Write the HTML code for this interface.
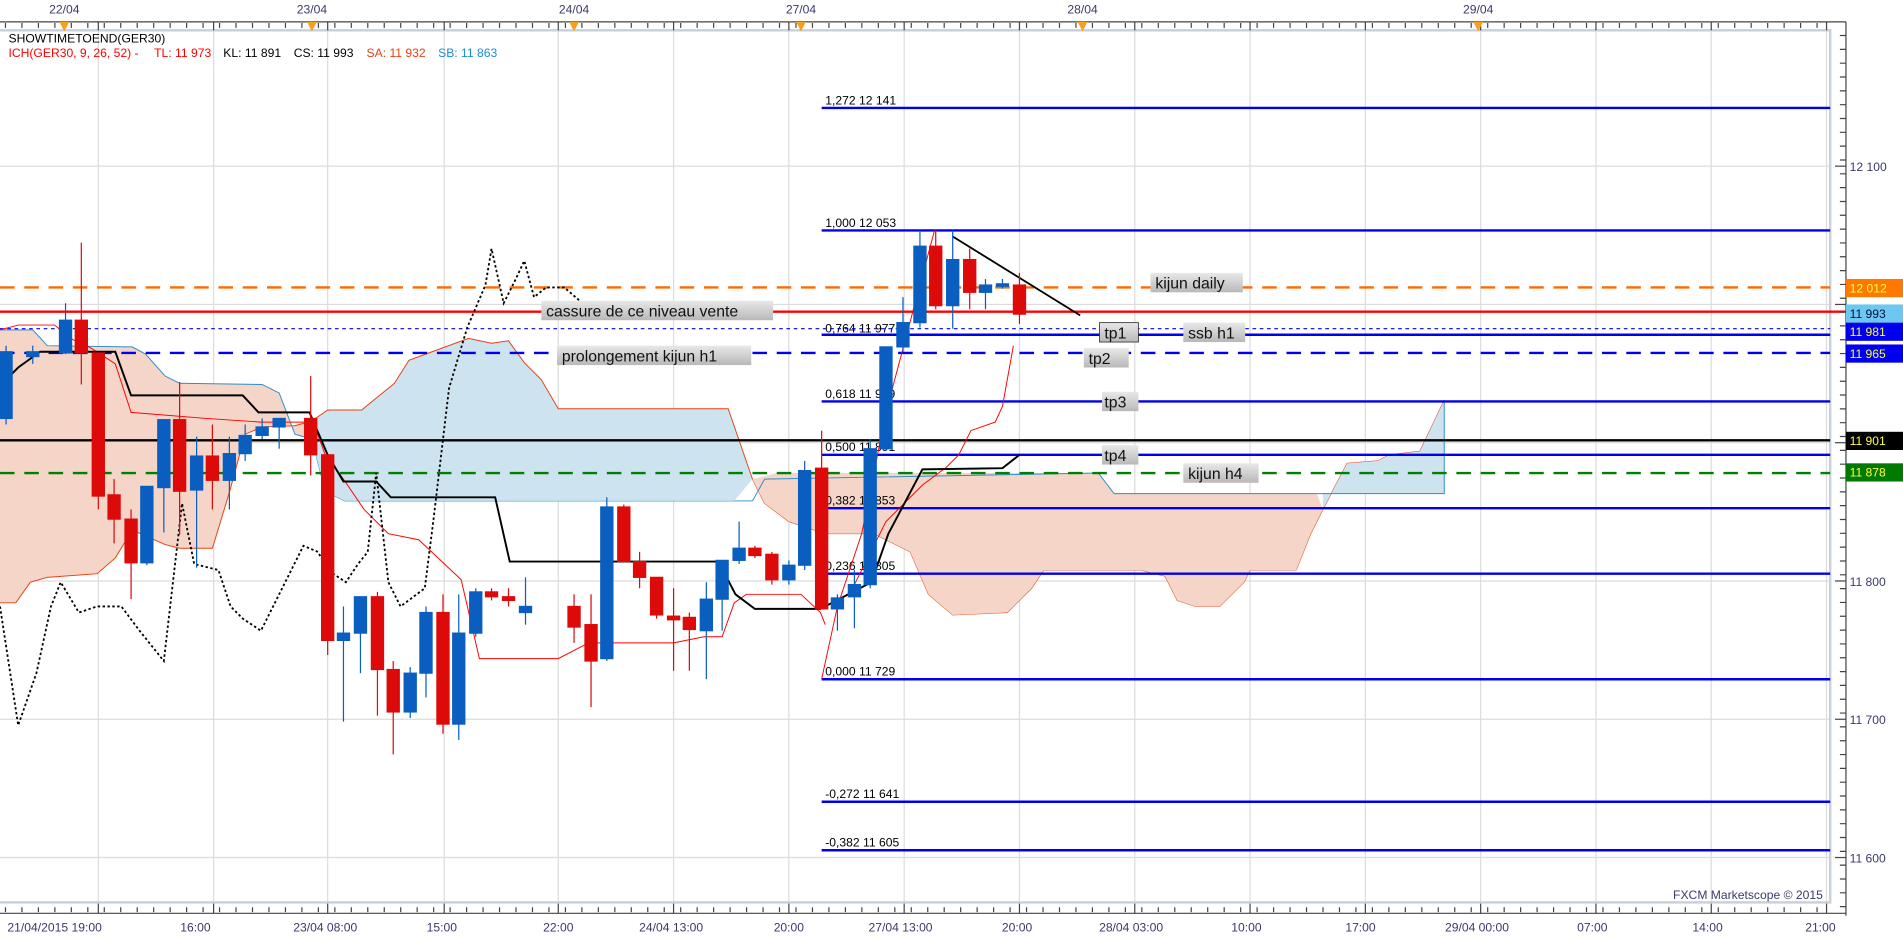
<!DOCTYPE html>
<html><head><meta charset="utf-8"><style>
html,body{margin:0;padding:0;background:#fff;overflow:hidden}
svg{display:block}
text{font-family:"Liberation Sans","DejaVu Sans",sans-serif}
</style></head><body>
<svg width="1903" height="940" viewBox="0 0 1568 775" preserveAspectRatio="none" xmlns="http://www.w3.org/2000/svg">
<rect width="1568" height="775" fill="#fff"/>
<!-- grid -->
<g stroke="#dcdcdc" stroke-width="1">
<line x1="81" y1="25" x2="81" y2="745"/><line x1="176" y1="25" x2="176" y2="745"/><line x1="270" y1="25" x2="270" y2="745"/><line x1="366" y1="25" x2="366" y2="745"/><line x1="460" y1="25" x2="460" y2="745"/><line x1="555" y1="25" x2="555" y2="745"/><line x1="650" y1="25" x2="650" y2="745"/><line x1="745" y1="25" x2="745" y2="745"/><line x1="840" y1="25" x2="840" y2="745"/><line x1="935" y1="25" x2="935" y2="745"/><line x1="1030" y1="25" x2="1030" y2="745"/><line x1="1125" y1="25" x2="1125" y2="745"/><line x1="1220" y1="25" x2="1220" y2="745"/><line x1="1315" y1="25" x2="1315" y2="745"/><line x1="1410" y1="25" x2="1410" y2="745"/><line x1="1505" y1="25" x2="1505" y2="745"/>
<line x1="0" y1="137" x2="1508" y2="137"/><line x1="0" y1="251" x2="1508" y2="251"/><line x1="0" y1="365" x2="1508" y2="365"/><line x1="0" y1="479" x2="1508" y2="479"/><line x1="0" y1="593" x2="1508" y2="593"/><line x1="0" y1="707" x2="1508" y2="707"/>
</g>
<rect x="-2" y="25" width="1510" height="719" fill="none" stroke="#c8d0dc" stroke-width="2"/>
<!-- clouds -->
<polygon fill="#f5d5c8" points="0,272 27,272 39,285 109,286 120,292 136,310 148,316 216,317 230,324 243,358 257,362 257,347 243,351 216,352 202,358 189,406 175,452 148,452 136,449 109,437 95,460 80,473 39,476 25,480 13,497 0,497"/>
<polyline fill="none" stroke="#2a8fc8" stroke-width="0.8" points="0,272 27,272 39,285 109,286 120,292 136,310 148,316 216,317 230,324 243,358 257,362 268,405 284,413 620,413"/>
<polygon fill="#cde3f0" points="257,347 270,338 298,338 325,316 337,297 356,290 386,279 405,283 419,281 432,299 446,313 460,337 600,337 620,395 605,413 284,413 268,405 257,362"/>
<polyline fill="none" stroke="#e84010" stroke-width="0.8" points="0,497 13,497 25,480 39,476 80,473 95,460 109,437 136,449 148,452 175,452 189,406 202,358 216,352 243,351 257,347 270,338 298,338 325,316 337,297 356,290 386,279 405,283 419,281 432,299 446,313 460,337 600,337 620,395 630,415 650,430 680,440 720,440 750,455 765,490 785,507 830,505 850,485 860,470 940,470 960,475 970,495 985,500 1005,500 1025,480 1030,470 1068,470 1080,440 1090,420 1110,382 1135,380 1145,375 1170,372 1190,330"/>
<polygon fill="#f5d5c8" points="620,395 640,390 905,390 918,407 1085,407 1090,420 1080,440 1068,470 1030,470 1025,480 1005,500 985,500 970,495 960,475 940,470 860,470 850,485 830,505 785,507 765,490 750,455 720,440 680,440 650,430 630,415"/>
<polygon fill="#cde3f0" points="1090,407 1190,407 1190,330 1170,372 1145,375 1135,380 1110,382 1090,420"/>
<polyline fill="none" stroke="#2a8fc8" stroke-width="0.8" points="620,413 630,395 905,390 918,407 1190,407 1190,330"/>
<!-- horizontal levels -->
<g stroke-width="2">
<line x1="677" y1="89" x2="1508" y2="89" stroke="#0000ee"/>
<line x1="677" y1="190" x2="1508" y2="190" stroke="#0000ee"/>
<line x1="0" y1="237" x2="1508" y2="237" stroke="#ff6a00" stroke-dasharray="12,8"/>
<line x1="0" y1="257" x2="1521" y2="257" stroke="#ff0000"/>
<line x1="0" y1="271" x2="1508" y2="271" stroke="#0000ee" stroke-width="1" stroke-dasharray="3,3"/>
<line x1="677" y1="276" x2="1508" y2="276" stroke="#0000ee"/>
<line x1="0" y1="291" x2="1508" y2="291" stroke="#0000ee" stroke-dasharray="12,8"/>
<line x1="677" y1="331" x2="1508" y2="331" stroke="#0000ee"/>
<line x1="0" y1="363" x2="1508" y2="363" stroke="#000"/>
<line x1="677" y1="375" x2="1508" y2="375" stroke="#0000ee"/>
<line x1="0" y1="390" x2="1508" y2="390" stroke="#008000" stroke-dasharray="12,8"/>
<line x1="677" y1="419" x2="1508" y2="419" stroke="#0000ee"/>
<line x1="677" y1="473" x2="1508" y2="473" stroke="#0000ee"/>
<line x1="677" y1="560" x2="1508" y2="560" stroke="#0000ee"/>
<line x1="677" y1="661" x2="1508" y2="661" stroke="#0000ee"/>
<line x1="677" y1="701" x2="1508" y2="701" stroke="#0000ee"/>
</g>
<g font-size="10" fill="#000">
<text x="680" y="86">1,272 12 141</text><text x="680" y="187">1,000 12 053</text><text x="680" y="274">0,764 11 977</text><text x="680" y="328">0,618 11 929</text><text x="680" y="372">0,500 11 891</text><text x="680" y="416">0,382 11 853</text><text x="680" y="470">0,236 11 805</text><text x="680" y="557">0,000 11 729</text><text x="680" y="658">-0,272 11 641</text><text x="680" y="698">-0,382 11 605</text>
</g>
<!-- tenkan -->
<polyline fill="none" stroke="#ff0000" stroke-width="0.8" points="0,272 15,268 45,268 60,280 75,287 95,300 108,340 170,345 215,348 258,348 268,375 283,395 300,420 320,440 345,445 380,478 395,543 460,543 485,530 555,530 580,525 595,525 605,497 615,490 660,490 676,505 680,515"/>
<polyline fill="none" stroke="#ff0000" stroke-width="0.8" points="677,560 690,500 710,440 730,340 750,265 770,190"/>
<polyline fill="none" stroke="#ff0000" stroke-width="0.8" points="700,490 715,460 730,430 760,400 780,385 790,375 800,355 820,348 826,335 835,285"/>
<!-- kijun -->
<polyline fill="none" stroke="#000" stroke-width="1.6" points="0,318 15,303 33,290 95,290 108,326 200,326 213,340 255,340 270,375 283,397 310,397 322,410 408,410 420,463 592,463 606,490 622,502 660,502 676,502 718,480 732,440 760,387 826,386 840,375"/>
<line x1="785" y1="195" x2="890" y2="260" stroke="#000" stroke-width="1.5"/>
<!-- chikou -->
<polyline fill="none" stroke="#000" stroke-width="1.5" stroke-dasharray="2,2" points="0,500 15,598 30,555 42,500 50,480 65,505 80,500 100,500 115,520 135,545 150,415 160,465 180,470 190,500 200,510 215,520 230,490 250,450 262,455 270,470 285,480 295,465 303,455 310,390 320,480 330,500 350,485 357,430 370,320 385,270 400,235 405,205 415,250 425,230 432,215 440,245 450,237 465,237 480,250"/>
<!-- candles -->
<g stroke-width="1">
<g fill="#0a5ec0" stroke="#0a5ec0">
<line x1="5" y1="285" x2="5" y2="350"/><rect x="0" y="290" width="10" height="55"/>
<line x1="27" y1="285" x2="27" y2="300"/><rect x="22" y="290" width="10" height="4"/>
<line x1="54" y1="250" x2="54" y2="292"/><rect x="49" y="264" width="10" height="27"/>
<line x1="121" y1="401" x2="121" y2="466"/><rect x="116" y="401" width="10" height="63"/>
<line x1="135" y1="346" x2="135" y2="439"/><rect x="130" y="346" width="10" height="56"/>
<line x1="162" y1="360" x2="162" y2="468"/><rect x="157" y="376" width="10" height="28"/>
<line x1="189" y1="360" x2="189" y2="420"/><rect x="184" y="374" width="10" height="22"/>
<line x1="202" y1="350" x2="202" y2="380"/><rect x="197" y="359" width="10" height="15"/>
<line x1="216" y1="345" x2="216" y2="362"/><rect x="211" y="352" width="10" height="7"/>
<line x1="230" y1="345" x2="230" y2="370"/><rect x="225" y="345" width="10" height="7"/>
<line x1="283" y1="500" x2="283" y2="595"/><rect x="278" y="522" width="10" height="6"/>
<line x1="297" y1="492" x2="297" y2="555"/><rect x="292" y="492" width="10" height="30"/>
<line x1="338" y1="550" x2="338" y2="592"/><rect x="333" y="555" width="10" height="32"/>
<line x1="351" y1="500" x2="351" y2="575"/><rect x="346" y="505" width="10" height="50"/>
<line x1="378" y1="490" x2="378" y2="610"/><rect x="373" y="522" width="10" height="75"/>
<line x1="392" y1="485" x2="392" y2="525"/><rect x="387" y="488" width="10" height="34"/>
<line x1="433" y1="476" x2="433" y2="515"/><rect x="428" y="500" width="10" height="5"/>
<line x1="500" y1="410" x2="500" y2="545"/><rect x="495" y="418" width="10" height="125"/>
<line x1="582" y1="480" x2="582" y2="560"/><rect x="577" y="494" width="10" height="26"/>
<line x1="595" y1="462" x2="595" y2="520"/><rect x="590" y="462" width="10" height="32"/>
<line x1="609" y1="430" x2="609" y2="465"/><rect x="604" y="452" width="10" height="10"/>
<line x1="650" y1="462" x2="650" y2="482"/><rect x="645" y="466" width="10" height="12"/>
<line x1="663" y1="380" x2="663" y2="470"/><rect x="658" y="388" width="10" height="78"/>
<line x1="690" y1="490" x2="690" y2="520"/><rect x="685" y="493" width="10" height="9"/>
<line x1="704" y1="470" x2="704" y2="518"/><rect x="699" y="482" width="10" height="10"/>
<line x1="717" y1="362" x2="717" y2="485"/><rect x="712" y="370" width="10" height="112"/>
<line x1="730" y1="286" x2="730" y2="372"/><rect x="725" y="286" width="10" height="84"/>
<line x1="744" y1="245" x2="744" y2="290"/><rect x="739" y="266" width="10" height="20"/>
<line x1="758" y1="190" x2="758" y2="270"/><rect x="753" y="203" width="10" height="63"/>
<line x1="785" y1="190" x2="785" y2="271"/><rect x="780" y="214" width="10" height="38"/>
<line x1="812" y1="230" x2="812" y2="255"/><rect x="807" y="235" width="10" height="6"/>
<line x1="826" y1="230" x2="826" y2="238"/><rect x="821" y="234" width="10" height="2"/>
</g>
<g fill="#dd0a0a" stroke="#dd0a0a">
<line x1="67" y1="200" x2="67" y2="317"/><rect x="62" y="264" width="10" height="27"/>
<line x1="81" y1="291" x2="81" y2="420"/><rect x="76" y="291" width="10" height="118"/>
<line x1="94" y1="395" x2="94" y2="448"/><rect x="89" y="408" width="10" height="20"/>
<line x1="108" y1="420" x2="108" y2="494"/><rect x="103" y="428" width="10" height="36"/>
<line x1="148" y1="315" x2="148" y2="441"/><rect x="143" y="346" width="10" height="59"/>
<line x1="175" y1="350" x2="175" y2="420"/><rect x="170" y="376" width="10" height="20"/>
<line x1="256" y1="310" x2="256" y2="392"/><rect x="251" y="345" width="10" height="30"/>
<line x1="270" y1="375" x2="270" y2="540"/><rect x="265" y="375" width="10" height="153"/>
<line x1="311" y1="488" x2="311" y2="590"/><rect x="306" y="492" width="10" height="60"/>
<line x1="324" y1="545" x2="324" y2="622"/><rect x="319" y="552" width="10" height="35"/>
<line x1="365" y1="490" x2="365" y2="605"/><rect x="360" y="505" width="10" height="92"/>
<line x1="405" y1="485" x2="405" y2="495"/><rect x="400" y="488" width="10" height="4"/>
<line x1="419" y1="485" x2="419" y2="500"/><rect x="414" y="492" width="10" height="3"/>
<line x1="473" y1="490" x2="473" y2="530"/><rect x="468" y="500" width="10" height="17"/>
<line x1="487" y1="490" x2="487" y2="583"/><rect x="482" y="515" width="10" height="30"/>
<line x1="514" y1="416" x2="514" y2="463"/><rect x="509" y="418" width="10" height="45"/>
<line x1="527" y1="455" x2="527" y2="485"/><rect x="522" y="463" width="10" height="13"/>
<line x1="541" y1="476" x2="541" y2="510"/><rect x="536" y="476" width="10" height="31"/>
<line x1="555" y1="485" x2="555" y2="553"/><rect x="550" y="508" width="10" height="3"/>
<line x1="568" y1="505" x2="568" y2="553"/><rect x="563" y="509" width="10" height="10"/>
<line x1="622" y1="450" x2="622" y2="460"/><rect x="617" y="452" width="10" height="6"/>
<line x1="636" y1="455" x2="636" y2="482"/><rect x="631" y="457" width="10" height="21"/>
<line x1="677" y1="355" x2="677" y2="502"/><rect x="672" y="386" width="10" height="116"/>
<line x1="771" y1="190" x2="771" y2="255"/><rect x="766" y="203" width="10" height="49"/>
<line x1="799" y1="205" x2="799" y2="255"/><rect x="794" y="214" width="10" height="27"/>
<line x1="840" y1="225" x2="840" y2="267"/><rect x="835" y="235" width="10" height="24"/>
</g>
</g>
<!-- annotation boxes -->
<defs><linearGradient id="g" x1="0" y1="0" x2="0" y2="1"><stop offset="0" stop-color="#e8e8e8"/><stop offset="1" stop-color="#b8b8b8"/></linearGradient></defs>
<g font-size="13" fill="#111">
<rect x="446" y="248" width="191" height="16" fill="url(#g)"/><text x="450" y="261">cassure de ce niveau vente</text>
<rect x="459" y="285" width="160" height="16" fill="url(#g)"/><text x="463" y="298">prolongement kijun h1</text>
<rect x="948" y="225" width="76" height="16" fill="url(#g)"/><text x="952" y="238">kijun daily</text>
<rect x="906" y="266" width="32" height="16" fill="url(#g)" stroke="#333" stroke-width="0.7"/><text x="910" y="279">tp1</text>
<rect x="975" y="266" width="51" height="16" fill="url(#g)"/><text x="979" y="279">ssb h1</text>
<rect x="893" y="287" width="37" height="16" fill="url(#g)"/><text x="897" y="300">tp2</text>
<rect x="908" y="323" width="30" height="16" fill="url(#g)"/><text x="910" y="336">tp3</text>
<rect x="908" y="367" width="30" height="16" fill="url(#g)"/><text x="910" y="380">tp4</text>
<rect x="975" y="382" width="62" height="16" fill="url(#g)"/><text x="979" y="395">kijun h4</text>
</g>
<!-- legend -->
<text x="7" y="35" font-size="10" fill="#000">SHOWTIMETOEND(GER30)</text>
<g font-size="10">
<text x="7" y="47" fill="#ff0000">ICH(GER30, 9, 26, 52) -</text>
<text x="127" y="47" fill="#ff0000">TL: 11 973</text>
<text x="184" y="47" fill="#000">KL: 11 891</text>
<text x="242" y="47" fill="#000">CS: 11 993</text>
<text x="302" y="47" fill="#e84010">SA: 11 932</text>
<text x="361" y="47" fill="#1a8fd0">SB: 11 863</text>
</g>
<!-- top axis -->
<rect x="0" y="0" width="1521" height="18" fill="#fff"/>
<line x1="0" y1="18" x2="1521" y2="18" stroke="#444"/>
<g stroke="#444"><line x1="81" y1="18" x2="81" y2="25"/><line x1="176" y1="18" x2="176" y2="25"/><line x1="270" y1="18" x2="270" y2="25"/><line x1="366" y1="18" x2="366" y2="25"/><line x1="460" y1="18" x2="460" y2="25"/><line x1="555" y1="18" x2="555" y2="25"/><line x1="650" y1="18" x2="650" y2="25"/><line x1="745" y1="18" x2="745" y2="25"/><line x1="840" y1="18" x2="840" y2="25"/><line x1="935" y1="18" x2="935" y2="25"/><line x1="1030" y1="18" x2="1030" y2="25"/><line x1="1125" y1="18" x2="1125" y2="25"/><line x1="1220" y1="18" x2="1220" y2="25"/><line x1="1315" y1="18" x2="1315" y2="25"/><line x1="1410" y1="18" x2="1410" y2="25"/><line x1="1505" y1="18" x2="1505" y2="25"/></g>
<line x1="0" y1="21" x2="1508" y2="21" stroke="#444" stroke-width="4" stroke-dasharray="1,12.57" stroke-dashoffset="-4"/>
<g font-size="10" fill="#3a3a6a" text-anchor="middle"><text x="53" y="11">22/04</text><text x="257" y="11">23/04</text><text x="473" y="11">24/04</text><text x="660" y="11">27/04</text><text x="892" y="11">28/04</text><text x="1218" y="11">29/04</text></g>
<g fill="#f5a020"><path d="M49 18h8l-4 8z"/><path d="M253 18h8l-4 8z"/><path d="M469 18h8l-4 8z"/><path d="M656 18h8l-4 8z"/><path d="M888 18h8l-4 8z"/><path d="M1214 18h8l-4 8z"/></g>
<!-- bottom axis -->
<line x1="0" y1="753" x2="1521" y2="753" stroke="#444"/>
<g stroke="#444"><line x1="81" y1="745" x2="81" y2="753"/><line x1="176" y1="745" x2="176" y2="753"/><line x1="270" y1="745" x2="270" y2="753"/><line x1="366" y1="745" x2="366" y2="753"/><line x1="460" y1="745" x2="460" y2="753"/><line x1="555" y1="745" x2="555" y2="753"/><line x1="650" y1="745" x2="650" y2="753"/><line x1="745" y1="745" x2="745" y2="753"/><line x1="840" y1="745" x2="840" y2="753"/><line x1="935" y1="745" x2="935" y2="753"/><line x1="1030" y1="745" x2="1030" y2="753"/><line x1="1125" y1="745" x2="1125" y2="753"/><line x1="1220" y1="745" x2="1220" y2="753"/><line x1="1315" y1="745" x2="1315" y2="753"/><line x1="1410" y1="745" x2="1410" y2="753"/><line x1="1505" y1="745" x2="1505" y2="753"/></g>
<line x1="0" y1="750" x2="1508" y2="750" stroke="#444" stroke-width="4" stroke-dasharray="1,12.57" stroke-dashoffset="-4"/>
<g font-size="10" fill="#3a3a6a" text-anchor="middle"><text x="45" y="768">21/04/2015 19:00</text><text x="161" y="768">16:00</text><text x="268" y="768">23/04 08:00</text><text x="364" y="768">15:00</text><text x="460" y="768">22:00</text><text x="553" y="768">24/04 13:00</text><text x="650" y="768">20:00</text><text x="742" y="768">27/04 13:00</text><text x="838" y="768">20:00</text><text x="932" y="768">28/04 03:00</text><text x="1027" y="768">10:00</text><text x="1121" y="768">17:00</text><text x="1217" y="768">29/04 00:00</text><text x="1312" y="768">07:00</text><text x="1407" y="768">14:00</text><text x="1500" y="768">21:00</text></g>
<text x="1502" y="741" font-size="10" fill="#3a3a6a" text-anchor="end">FXCM Marketscope © 2015</text>
<!-- right axis -->
<line x1="1521" y1="18" x2="1521" y2="755" stroke="#444"/>
<line x1="1518.5" y1="25" x2="1518.5" y2="750" stroke="#444" stroke-width="5" stroke-dasharray="1,10.4" stroke-dashoffset="-3.8"/>
<g stroke="#444">
<line x1="1512" y1="137" x2="1521" y2="137"/><line x1="1512" y1="251" x2="1521" y2="251"/><line x1="1512" y1="365" x2="1521" y2="365"/><line x1="1512" y1="479" x2="1521" y2="479"/><line x1="1512" y1="593" x2="1521" y2="593"/><line x1="1512" y1="707" x2="1521" y2="707"/>
</g>
<g font-size="10" fill="#3a3a6a"><text x="1524" y="141">12 100</text><text x="1524" y="483">11 800</text><text x="1524" y="597">11 700</text><text x="1524" y="711">11 600</text></g>
<g font-size="10">
<rect x="1521" y="230" width="47" height="15" fill="#ff7800"/><text x="1524" y="241" fill="#ffff40">12 012</text>
<rect x="1521" y="251" width="47" height="15" fill="#6cc8f0"/><text x="1524" y="262" fill="#001040">11 993</text>
<rect x="1521" y="266" width="47" height="15" fill="#0000ee"/><text x="1524" y="277" fill="#ffff40">11 981</text>
<rect x="1521" y="284" width="47" height="15" fill="#0000ee"/><text x="1524" y="295" fill="#ffff40">11 965</text>
<rect x="1521" y="356" width="47" height="15" fill="#000"/><text x="1524" y="367" fill="#ffff40">11 901</text>
<rect x="1521" y="382" width="47" height="15" fill="#007a00"/><text x="1524" y="393" fill="#ffff40">11 878</text>
</g>
</svg>
</body></html>
